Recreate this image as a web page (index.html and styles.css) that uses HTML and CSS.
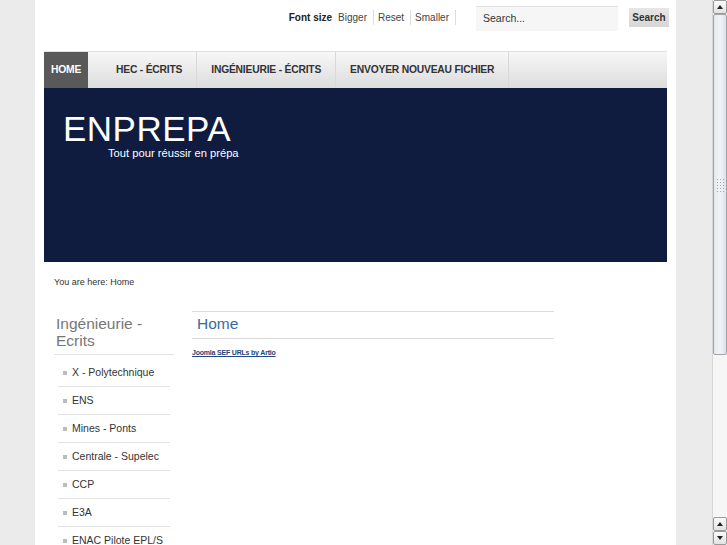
FILE: index.html
```html
<!DOCTYPE html>
<html>
<head>
<meta charset="utf-8">
<link rel="stylesheet" href="styles.css">
</head>
<body>
<div class="page">
  <div class="wrap">
    <div class="topbar">
      <div class="fontsize">
        <b>Font size</b>
        <span class="fs-link">Bigger</span>
        <span class="fs-link">Reset</span>
        <span class="fs-link">Smaller</span>
      </div>
      <div class="search">
        <div class="search-input">Search...</div>
        <div class="search-btn">Search</div>
      </div>
    </div>
    <div class="nav">
      <div class="nav-item active">HOME</div>
      <div class="nav-item">HEC - ÉCRITS</div>
      <div class="nav-item">INGÉNIEURIE - ÉCRITS</div>
      <div class="nav-item">ENVOYER NOUVEAU FICHIER</div>
    </div>
    <div class="header">
      <div class="logo">ENPREPA</div>
      <div class="tagline">Tout pour réussir en prépa</div>
    </div>
    <div class="breadcrumb">You are here: Home</div>
    <div class="content">
      <div class="sidebar">
        <div class="side-title">Ingénieurie - Ecrits</div>
        <ul class="side-list">
          <li>X - Polytechnique</li>
          <li>ENS</li>
          <li>Mines - Ponts</li>
          <li>Centrale - Supelec</li>
          <li>CCP</li>
          <li>E3A</li>
          <li>ENAC Pilote EPL/S</li>
        </ul>
      </div>
      <div class="main">
        <div class="main-title">Home</div>
        <a class="credit" href="#">Joomla SEF URLs by Artio</a>
      </div>
    </div>
  </div>
</div>
<div class="scrollbar">
  <div class="sb-btn up"></div>
  <div class="sb-thumb"><div class="grip"></div></div>
  <div class="sb-track"></div>
  <div class="sb-btn up"></div>
  <div class="sb-btn down"></div>
</div>
</body>
</html>
```
FILE: styles.css
```css
html, body {
  margin: 0;
  padding: 0;
  height: 545px;
  overflow: hidden;
}
body {
  background: #ebebeb;
  font-family: "Liberation Sans", Arial, sans-serif;
  color: #333;
}
.page {
  width: 641px;
  margin-left: 35px;
  background: #fff;
  height: 545px;
}
.wrap {
  padding: 0 9px;
}
.topbar {
  height: 51px;
  display: flex;
  justify-content: flex-end;
  align-items: flex-start;
}
.fontsize {
  display: flex;
  align-items: center;
  font-size: 10px;
  margin-top: 10px;
  height: 15px;
}
.fontsize b {
  color: #222;
  margin-right: 6px;
}
.fs-link {
  padding: 0 6px 0 4px;
  border-right: 1px solid #ddd;
  line-height: 15px;
  color: #444;
}
.fs-link:first-of-type { padding-left: 0; }
.search {
  display: flex;
  margin-left: 20px;
  margin-top: 6px;
}
.search-input {
  width: 142px;
  height: 25px;
  line-height: 23px;
  padding-left: 7px;
  font-size: 10.5px;
  color: #333;
  background: #f6f6f6;
  border-top: 1px solid #e3e3e3;
  box-sizing: border-box;
}
.search-btn {
  margin-left: 11px;
  margin-top: 2px;
  width: 40px;
  height: 19px;
  line-height: 19px;
  font-size: 10px;
  font-weight: bold;
  text-align: center;
  color: #333;
  background: linear-gradient(#e6e6e6, #d6d6d6);
  margin-right: -2px;
}
.nav {
  display: flex;
  height: 37px;
  background: linear-gradient(#f7f7f7, #dcdcdc);
  border-top: 1px solid #e2e2e2;
  box-sizing: border-box;
}
.nav-item {
  font-size: 10.3px;
  font-weight: bold;
  color: #333;
  line-height: 35px;
  padding: 0 14px;
  border-right: 1px solid #d8d8d8;
  letter-spacing: -0.2px;
}
.nav-item:nth-child(2) { padding: 0 14px 0 28px; }
.nav-item.active {
  background: #595959;
  color: #fff;
  width: 44px;
  padding: 0;
  text-align: center;
  border-right: none;
  box-sizing: border-box;
}
.header {
  background: #0f1c40;
  height: 174px;
  padding: 24px 0 0 19px;
  box-sizing: border-box;
  color: #fff;
}
.logo {
  font-size: 35px;
  line-height: 34px;
  letter-spacing: 0.5px;
}
.tagline {
  font-size: 11.2px;
  line-height: 13px;
  margin-left: 45px;
  margin-top: 1px;
}
.breadcrumb {
  font-size: 9px;
  color: #333;
  padding: 15px 0 0 10px;
  height: 33px;
  box-sizing: content-box;
}
.content {
  display: flex;
  padding-left: 10px;
}
.sidebar {
  width: 120px;
}
.side-title {
  font-size: 15.5px;
  line-height: 17px;
  color: #777;
  padding: 5px 0 5px 2px;
  border-bottom: 1px solid #e2e2e2;
}
.side-list {
  list-style: none;
  margin: 0 0 0 4px;
  padding: 4px 0 0 0;
  width: 112px;
}
.side-list li {
  font-size: 10.5px;
  color: #333;
  height: 28px;
  line-height: 27px;
  border-bottom: 1px solid #e2e2e2;
  box-sizing: border-box;
  padding-left: 14px;
  position: relative;
}
.side-list li::before {
  content: "";
  position: absolute;
  left: 5px;
  top: 12px;
  width: 4px;
  height: 4px;
  background: #bbb;
}
.main {
  margin-left: 18px;
  width: 362px;
  padding-top: 1px;
}
.main-title {
  font-size: 15.5px;
  color: #3a6aa0;
  border-top: 1px solid #dcdcdc;
  border-bottom: 1px solid #dcdcdc;
  height: 26px;
  line-height: 24px;
  padding-left: 5px;
}
.credit {
  display: inline-block;
  font-size: 7px;
  color: #24467e;
  margin-top: 10px;
  font-weight: bold;
  letter-spacing: -0.2px;
}
.scrollbar {
  position: fixed;
  right: 0;
  top: 0;
  width: 15px;
  height: 545px;
  background: #f6f6f6;
  display: flex;
  flex-direction: column;
  border-left: 1px solid #d6d6d6;
  box-sizing: border-box;
}
.sb-btn {
  height: 14px;
  flex: none;
  background: linear-gradient(#fafafa, #e2e2e2);
  border: 1px solid #9a9a9a;
  border-radius: 2px;
  box-sizing: border-box;
  position: relative;
}
.sb-btn::after {
  content: "";
  position: absolute;
  left: 3px;
  top: 4px;
  border-left: 3px solid transparent;
  border-right: 3px solid transparent;
}
.sb-btn.up::after { border-bottom: 4px solid #222; }
.sb-btn.down::after { border-top: 4px solid #222; }
.sb-thumb {
  height: 341px;
  flex: none;
  background: linear-gradient(90deg, #e4e8ee, #f2f4f7 50%, #dde1e7);
  border: 1px solid #a0a4aa;
  border-radius: 2px;
  box-sizing: border-box;
  display: flex;
  align-items: center;
  justify-content: center;
}
.grip {
  width: 8px;
  height: 14px;
  background-image: radial-gradient(#9aa 0.8px, transparent 1px);
  background-size: 3px 3px;
}
.sb-track {
  flex: 1;
}
```
